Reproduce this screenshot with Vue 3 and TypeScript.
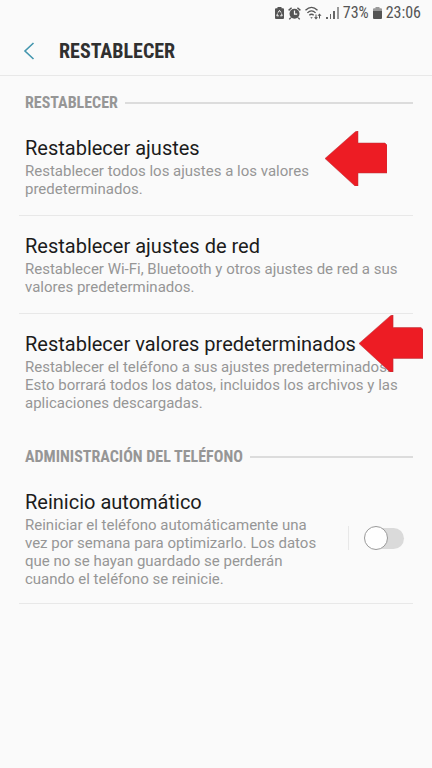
<script setup lang="ts">
import { ref } from 'vue'

interface Setting {
  title: string
  detail: string
  marked: boolean
}

const settings: Setting[] = [
  {
    title: 'Restablecer ajustes',
    detail: 'Restablecer todos los ajustes a los valores predeterminados.',
    marked: true,
  },
  {
    title: 'Restablecer ajustes de red',
    detail: 'Restablecer Wi-Fi, Bluetooth y otros ajustes de red a sus valores predeterminados.',
    marked: false,
  },
  {
    title: 'Restablecer valores predeterminados',
    detail:
      'Restablecer el teléfono a sus ajustes predeterminados. Esto borrará todos los datos, incluidos los archivos y las aplicaciones descargadas.',
    marked: true,
  },
]

const autoRestart = ref(false)
</script>

<template>
  <div class="screen">
    <div class="status">
      <svg class="glyph" width="9" height="12" viewBox="0 0 9 12">
        <path d="M2.500 0h4v1.200H8q1 0 1 1v8.800q0 1-1 1H1q-1 0-1-1V2.200q0-1 1-1h1.500z" fill="#555" />
        <path d="M3 5.600 4.500 3.400 6 5.600M2.500 6.600 1.800 8.800h2M6.500 6.600l.7 2.200h-2" fill="none" stroke="#fafafa" />
      </svg>
      <svg class="glyph" width="13" height="13" viewBox="0 0 13 13">
        <path d="M.6 3.400 3.600.8M12.400 3.400 9.400.8M2.800 10.600l-1.500 1.800M10.200 10.600l1.500 1.800" stroke="#555" stroke-width="1.400" />
        <circle cx="6.500" cy="6.800" r="5" fill="#555" />
        <path d="M6.500 3.600v3.600h2.700" fill="none" stroke="#fafafa" stroke-width="1.200" />
      </svg>
      <svg class="glyph" width="17" height="14" viewBox="0 0 17 14">
        <g fill="none" stroke="#555" stroke-width="1.300">
          <path d="M.5 4.300Q6.500-1.600 12.500 4.300M2.400 6.900Q6.500 2.700 10.600 6.900M4.300 9.300Q6.500 7.200 8.700 9.300" />
        </g>
        <path d="M6.500 12.800 5.300 11.200h2.400z" fill="#555" />
        <path d="M10.500 8.600h1v2.600h1.500l-2 2.400-2-2.400h1.500zM14 12.400h1V9.800h1.500l-2-2.400-2 2.400H14z" fill="#555" />
      </svg>
      <svg class="glyph" width="13" height="12" viewBox="0 0 13 12">
        <path d="M0 10h2v2H0zM4 7h1v5H4zM7 4h2v8H7z" fill="#666" />
        <path d="M11 0h2v12h-2z" fill="#999" />
      </svg>
      <span class="reading">73%</span>
      <svg class="glyph" width="9" height="12" viewBox="0 0 9 12">
        <path d="M2.500 0h4v1.200H8q1 0 1 1V4H0V2.200q0-1 1-1h1.500z" fill="#999" />
        <path d="M0 4h9v7q0 1-1 1H1q-1 0-1-1z" fill="#555" />
      </svg>
      <span class="reading">23:06</span>
    </div>

    <header class="bar">
      <button class="back" type="button" aria-label="Atrás">
        <svg width="12" height="18" viewBox="0 0 12 18">
          <path d="M10.500 1 2 9l8.500 8" fill="none" stroke="#4396ae" stroke-width="1.600" />
        </svg>
      </button>
      <h1>RESTABLECER</h1>
    </header>

    <main>
      <section>
        <h2>RESTABLECER</h2>
        <ul>
          <li v-for="item in settings" :key="item.title">
            <button class="row" type="button">
              <span class="title">{{ item.title }}</span>
              <span class="detail">{{ item.detail }}</span>
            </button>
            <svg v-if="item.marked" class="arrow" viewBox="0 0 62 55">
              <path d="M0 27.500 30 1q1-1 3-1v12h27l2 2v28H33v13h-3z" fill="#ed1c24" stroke="#b5343a" stroke-width=".5" />
            </svg>
          </li>
        </ul>
      </section>

      <section>
        <h2>ADMINISTRACIÓN DEL TELÉFONO</h2>
        <div class="restart">
          <label class="row" for="auto-restart">
            <span class="title">Reinicio automático</span>
            <span class="detail">Reiniciar el teléfono automáticamente una vez por semana para optimizarlo. Los datos que no se hayan guardado se perderán cuando el teléfono se reinicie.</span>
          </label>
          <div class="toggle">
            <input id="auto-restart" v-model="autoRestart" type="checkbox" role="switch" />
          </div>
        </div>
      </section>
    </main>
  </div>
</template>

<style>
body {
  background: #fafafa;
}
</style>

<style scoped>
.screen {
  font-family: Roboto, sans-serif;
  color: #1c1c1c;
  overflow: hidden;
}

.status {
  display: flex;
  align-items: center;
  justify-content: flex-end;
  gap: 4px;
  height: 26px;
  padding-right: 11px;
}

.glyph {
  flex: none;
}

.reading {
  font-family: "Roboto Condensed", Roboto, sans-serif;
  font-size: 16px;
  line-height: 20px;
  color: #555;
}

.bar {
  display: flex;
  align-items: center;
  gap: 24px;
  height: 49px;
  padding: 0 23px;
  border-bottom: 1px solid #e8e8e8;
}

.back {
  display: flex;
  padding: 0;
  border: 0;
  background: none;
}

h1 {
  margin: 0;
  font-family: "Roboto Condensed", Roboto, sans-serif;
  font-size: 20px;
  line-height: 24px;
  font-weight: 700;
  color: #303030;
}

main {
  display: grid;
  gap: 18px;
  padding: 17px 19px 0;
}

h2 {
  display: flex;
  align-items: center;
  gap: 7px;
  margin: 0 0 5px;
  padding-left: 6px;
  font-family: "Roboto Condensed", Roboto, sans-serif;
  font-size: 16px;
  line-height: 20px;
  font-weight: 700;
  color: #969696;
}

h2::after {
  content: "";
  flex: 1;
  height: 2px;
  background: #dcdcdc;
}

ul {
  margin: 0;
  padding: 0;
  list-style: none;
}

li {
  position: relative;
}

li:not(:last-child),
.restart {
  border-bottom: 1px solid #e8e8e8;
}

.row {
  display: block;
  width: 100%;
  padding: 18px 6px 17px;
  border: 0;
  background: none;
  font: inherit;
  text-align: left;
  color: inherit;
}

.title,
.detail {
  display: block;
}

.title {
  margin-bottom: 2px;
  font-size: 20px;
  line-height: 24px;
}

.detail {
  font-size: 15px;
  line-height: 18px;
  color: #969696;
}

/* Red pointers laid over the highlighted entries */
.arrow {
  position: absolute;
  top: 13px;
  right: 26px;
  width: 62px;
  height: 55px;
}

li:last-child .arrow {
  top: 1px;
  right: -10px;
  width: 64px;
  height: 57px;
}

.restart {
  display: flex;
  align-items: center;
}

.restart .row {
  flex: 1;
  padding-right: 24px;
  padding-bottom: 15px;
}

.toggle {
  flex: none;
  padding: 0 9px 0 15px;
  border-left: 1px solid #e8e8e8;
}

.toggle input {
  appearance: none;
  display: block;
  position: relative;
  width: 40px;
  height: 24px;
  margin: 0;
}

.toggle input::before {
  content: "";
  position: absolute;
  inset: 2px 0 1px 1px;
  border-radius: 12px;
  background: #dadada;
}

.toggle input::after {
  content: "";
  position: absolute;
  top: 0;
  left: 0;
  box-sizing: border-box;
  width: 24px;
  height: 24px;
  border: 1px solid #999;
  border-radius: 50%;
  background: #fefefe;
}

.toggle input:checked::after {
  left: 16px;
}
</style>
